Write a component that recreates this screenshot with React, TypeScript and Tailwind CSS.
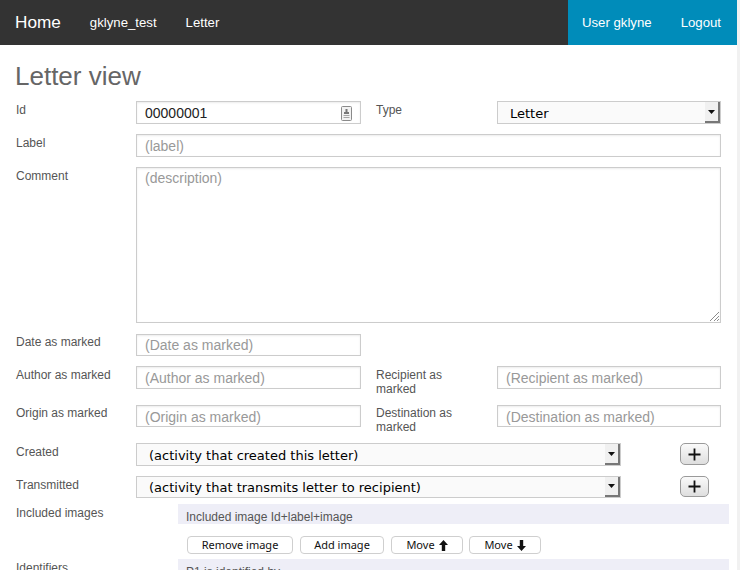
const sans = "font-['Liberation_Sans',Arial,sans-serif]";

function Field({ placeholder, value, className = "", tall = false, icon = false, textPad = "pt-[2px]" }: { placeholder?: string; value?: string; className?: string; tall?: boolean; icon?: boolean; textPad?: string }) {
  return (
    <div className={`relative border border-[#cccccc] bg-white shadow-[inset_0_1px_2px_rgba(0,0,0,0.08)] px-2 text-[14px] ${tall ? "" : `flex items-center ${textPad}`} ${className}`}>
      {value ? <span className="text-[#222222]">{value}</span> : <span className="text-[#999999]">{placeholder}</span>}
      {icon && (
        <svg className="absolute right-[8px] top-[4px]" width="11" height="15" viewBox="0 0 11 15">
          <rect x="0.5" y="0.5" width="10" height="14" rx="1" fill="#f2f2f2" stroke="#8a8a8a" />
          <rect x="4.5" y="3" width="2" height="4" fill="#777777" />
          <rect x="3" y="6" width="5" height="2" fill="#777777" />
          <rect x="2.5" y="9" width="6" height="1" fill="#a5a5a5" />
          <rect x="2.5" y="11" width="6" height="1" fill="#a5a5a5" />
        </svg>
      )}
      {tall && (
        <svg className="absolute right-0 bottom-0" width="12" height="12" viewBox="0 0 12 12">
          <path d="M11 2 2 11M11 6 6 11M11 9 9 11" stroke="#8c8c8c" strokeWidth="1" fill="none" />
        </svg>
      )}
    </div>
  );
}

function Select({ value, className = "" }: { value: string; className?: string }) {
  return (
    <div className={`flex items-center justify-between border border-[#cccccc] bg-[#fafafa] text-black font-['DejaVu_Sans',sans-serif] text-[13px] pl-[12px] ${className}`}>
      <span className="pt-[2px]">{value}</span>
      <span className="flex h-full w-[15px] items-center justify-center self-stretch border-r-2 border-b-2 border-r-[#777777] border-b-[#777777] bg-[#f0f0f0]">
        <svg width="7" height="4" viewBox="0 0 7 4"><path d="M0 0h7L3.5 4z" fill="#111111" /></svg>
      </span>
    </div>
  );
}

function Label({ children, className = "" }: { children: React.ReactNode; className?: string }) {
  return <div className={`text-[12px] leading-[14px] text-[#555555] ${className}`}>{children}</div>;
}

function PlusButton({ className = "h-[22px]" }: { className?: string }) {
  return (
    <div className={`flex w-[29px] items-center justify-center rounded-[5px] border border-[#9a9a9a] bg-gradient-to-b from-[#fafafa] to-[#dedede] ${className}`}>
      <svg width="13" height="13" viewBox="0 0 13 13"><path d="M6.5 0.5v12M0.5 6.5h12" stroke="#111111" strokeWidth="1.8" /></svg>
    </div>
  );
}

function SmallButton({ children, className = "" }: { children: React.ReactNode; className?: string }) {
  return (
    <div className={`flex h-[18px] items-center justify-center gap-[4px] rounded-[4px] border border-[#cfcfcf] bg-white text-[11px] text-[#111111] font-['Noto_Sans',sans-serif] ${className}`}>
      {children}
    </div>
  );
}

function Arrow({ down = false }: { down?: boolean }) {
  return (
    <svg width="9" height="11" viewBox="0 0 9 11" className={down ? "rotate-180" : ""}>
      <path d="M4.5 0 9 5H6.2v6H2.8V5H0z" fill="#111111" />
    </svg>
  );
}

export default function App() {
  return (
    <div className={`flex h-[570px] w-[740px] overflow-hidden bg-white ${sans}`}>
      <div className="flex w-[737px] shrink-0 flex-col">
        <nav className="flex h-[45px] shrink-0 items-center justify-between bg-[#333333] text-white">
          <div className="flex items-center">
            <span className="ml-[15px] text-[17.2px]">Home</span>
            <span className="ml-[29px] text-[13.2px]">gklyne_test</span>
            <span className="ml-[29px] text-[13.2px]">Letter</span>
          </div>
          <div className="flex h-full w-[169px] items-center bg-[#008cba] text-[13.2px]">
            <span className="ml-[14px]">User gklyne</span>
            <span className="ml-[29px]">Logout</span>
          </div>
        </nav>

        <main className="flex flex-col pl-[16px]">
          <h1 className="mt-[17px] h-[39px] text-[26px] leading-[29px] text-[#666666] -ml-px">Letter view</h1>

          <div className="flex h-[23px] items-start">
            <Label className="mt-[2px] w-[120px]">Id</Label>
            <Field value="00000001" icon className="h-[23px] w-[225px]" />
            <Label className="ml-[15px] mt-[2px] w-[121px]">Type</Label>
            <Select value="Letter" className="h-[23px] w-[224px]" />
          </div>

          <div className="mt-[10px] flex h-[23px] items-start">
            <Label className="mt-[2px] w-[120px]">Label</Label>
            <Field placeholder="(label)" className="h-[23px] w-[585px]" />
          </div>

          <div className="mt-[10px] flex h-[156px] items-start">
            <Label className="mt-[2px] w-[120px]">Comment</Label>
            <Field tall placeholder="(description)" className="h-[156px] w-[585px]" />
          </div>

          <div className="mt-[11px] flex h-[22px] items-start">
            <Label className="mt-px w-[120px]">Date as marked</Label>
            <Field placeholder="(Date as marked)" textPad="pt-0" className="h-[22px] w-[225px]" />
          </div>

          <div className="mt-[10px] flex h-[29px] items-start">
            <Label className="mt-[2px] w-[120px]">Author as marked</Label>
            <Field placeholder="(Author as marked)" className="h-[23px] w-[225px]" />
            <Label className="ml-[15px] mt-[2px] w-[121px]">Recipient as<br />marked</Label>
            <Field placeholder="(Recipient as marked)" className="h-[23px] w-[224px]" />
          </div>

          <div className="mt-[10px] flex h-[28px] items-start">
            <Label className="mt-[1px] w-[120px]">Origin as marked</Label>
            <Field placeholder="(Origin as marked)" className="h-[22px] w-[225px]" />
            <Label className="ml-[15px] mt-[1px] w-[121px]">Destination as<br />marked</Label>
            <Field placeholder="(Destination as marked)" className="h-[22px] w-[224px]" />
          </div>

          <div className="mt-[10px] flex h-[23px] items-start">
            <Label className="mt-[2px] w-[120px]">Created</Label>
            <Select value="(activity that created this letter)" className="h-[23px] w-[485px]" />
            <div className="ml-[59px]"><PlusButton /></div>
          </div>

          <div className="mt-[10px] flex h-[22px] items-start">
            <Label className="mt-[2px] w-[120px]">Transmitted</Label>
            <Select value="(activity that transmits letter to recipient)" className="h-[22px] w-[485px]" />
            <div className="ml-[59px]"><PlusButton className="h-[21px]" /></div>
          </div>

          <div className="mt-[6px] flex h-[20px] items-start">
            <Label className="mt-[2px] w-[162px]">Included images</Label>
            <div className="flex h-[20px] w-[551px] items-center bg-[#eeeef7] pl-[8px] pt-[5px] text-[12px] text-[#555555]">Included image Id+label+image</div>
          </div>

          <div className="ml-[171px] mt-[12px] flex h-[18px] items-start">
            <SmallButton className="w-[106px]">Remove image</SmallButton>
            <SmallButton className="ml-[7px] w-[84px]">Add image</SmallButton>
            <SmallButton className="ml-[7px] w-[72px]">Move <Arrow /></SmallButton>
            <SmallButton className="ml-[6px] w-[72px]">Move <Arrow down /></SmallButton>
          </div>

          <div className="mt-[5px] flex h-[20px] items-start">
            <Label className="mt-[2px] w-[162px]">Identifiers</Label>
            <div className="h-[20px] w-[551px] bg-[#eeeef7] pl-[8px] pt-[4px] text-[12px] text-[#555555]">P1 is identified by</div>
          </div>
        </main>
      </div>
      <div className="h-full w-[3px] bg-[#f1f1f1]" />
    </div>
  );
}
